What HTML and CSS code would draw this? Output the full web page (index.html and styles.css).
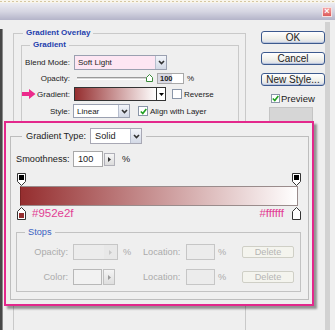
FILE: index.html
```html
<!DOCTYPE html>
<html>
<head>
<meta charset="utf-8">
<link rel="stylesheet" href="styles.css">
</head>
<body>
<div class="page">
  <div class="topstrip"></div>
  <div class="titlebar"><span class="close">×</span></div>
  <div class="dialog">
    <div class="stylelist"></div>
    <div class="main">
      <fieldset class="group outer">
        <legend class="glegend">Gradient Overlay</legend>
        <fieldset class="group inner">
          <legend class="glegend glegend-in">Gradient</legend>
          <div class="row r-blend">
            <span class="lbl">Blend Mode:</span>
            <div class="select pinksel"><span class="seltext">Soft Light</span><span class="ddbtn"><svg width="7" height="5" viewBox="0 0 7 5"><polyline points="1,1 3.5,3.6 6,1" fill="none" stroke="#333" stroke-width="1.6"/></svg></span></div>
          </div>
          <div class="row r-opacity">
            <span class="lbl">Opacity:</span>
            <div class="slider"><span class="track"></span><svg class="thumb" width="7" height="8" viewBox="0 0 7 8"><path d="M3.5 0.5 L6.5 3.5 V7.5 H0.5 V3.5 Z" fill="#fff" stroke="#3a8a3a" stroke-width="1"/></svg></div>
            <span class="numbox">100</span><span class="pct">%</span>
          </div>
          <div class="row r-grad">
            <span class="lbl lbl-arrow"><svg width="14" height="10" viewBox="0 0 14 10"><path d="M0 3 H7 V0 L13.5 5 L7 10 V7 H0 Z" fill="#ec2a8c"/></svg><span>Gradient:</span></span>
            <div class="gswatch"></div>
            <span class="ddsmall"><svg width="5" height="3" viewBox="0 0 5 3"><path d="M0 0 H5 L2.5 3 Z" fill="#000"/></svg></span>
            <span class="cb cb-rev"></span><span class="cbtext">Reverse</span>
          </div>
          <div class="row r-style">
            <span class="lbl lbl-style">Style:</span>
            <div class="select linsel"><span class="seltext">Linear</span><span class="ddbtn"><svg width="7" height="5" viewBox="0 0 7 5"><polyline points="1,1 3.5,3.6 6,1" fill="none" stroke="#333" stroke-width="1.6"/></svg></span></div>
            <span class="cb cb-align"><svg width="7" height="7" viewBox="0 0 7 7"><path d="M0.8 3.5 L2.8 5.6 L6.3 1" fill="none" stroke="#21a121" stroke-width="1.6"/></svg></span><span class="cbtext">Align with Layer</span>
          </div>
        </fieldset>
      </fieldset>
    </div>
    <div class="side">
      <button class="xpbtn">OK</button>
      <button class="xpbtn">Cancel</button>
      <button class="xpbtn">New Style...</button>
      <div class="preview-row"><span class="cb cb-prev"><svg width="7" height="7" viewBox="0 0 7 7"><path d="M0.8 3.5 L2.8 5.6 L6.3 1" fill="none" stroke="#21a121" stroke-width="1.6"/></svg></span><span class="prevtext">Preview</span></div>
      <div class="prevswatch"></div>
    </div>
    <div class="rightedge"></div>
  </div>

  <div class="editor">
    <fieldset class="gfs">
      <legend class="typelegend">
        <span>Gradient Type:</span>
        <div class="select solidsel"><span class="seltext">Solid</span><span class="ddbtn"><svg width="7" height="5" viewBox="0 0 7 5"><polyline points="1,1 3.5,3.6 6,1" fill="none" stroke="#333" stroke-width="1.6"/></svg></span></div>
      </legend>
      <div class="smooth-row">
        <span class="smooth-lbl">Smoothness:</span>
        <span class="smooth-in">100</span>
        <span class="arrowbtn"><svg width="3" height="5" viewBox="0 0 3 5"><path d="M0 0 L3 2.5 L0 5 Z" fill="#333"/></svg></span>
        <span class="smooth-pct">%</span>
      </div>
      <div class="markers">
        <svg width="9" height="13" viewBox="0 0 9 13"><path d="M0.5 0.5 H8.5 V8.5 L4.5 12.5 L0.5 8.5 Z" fill="#fff" stroke="#333"/><rect x="2" y="2" width="5" height="5" fill="#000"/></svg>
        <svg width="9" height="13" viewBox="0 0 9 13"><path d="M0.5 0.5 H8.5 V8.5 L4.5 12.5 L0.5 8.5 Z" fill="#fff" stroke="#333"/><rect x="2" y="2" width="5" height="5" fill="#000"/></svg>
      </div>
      <div class="gbar"></div>
      <div class="markers colorstops">
        <svg width="9" height="13" viewBox="0 0 9 13"><path d="M4.5 0.5 L8.5 4.5 V12.5 H0.5 V4.5 Z" fill="#fff" stroke="#333"/><rect x="2" y="6" width="5" height="5" fill="#952e2f"/></svg>
        <span class="hex hex-left">#952e2f</span>
        <span class="hex hex-right">#ffffff</span>
        <svg width="9" height="13" viewBox="0 0 9 13"><path d="M4.5 0.5 L8.5 4.5 V12.5 H0.5 V4.5 Z" fill="#fff" stroke="#333"/></svg>
      </div>
      <fieldset class="stops">
        <legend class="stopslegend">Stops</legend>
        <div class="stopgrid">
          <span class="slbl">Opacity:</span>
          <span class="dis-in opin"><span class="in-arrow"><svg width="3" height="5" viewBox="0 0 3 5"><path d="M0 0 L3 2.5 L0 5 Z" fill="#c8c8c8"/></svg></span></span>
          <span class="spct">%</span>
          <span class="loclbl">Location:</span>
          <span class="dis-in"></span>
          <span class="spct2">%</span>
          <span class="delbtn">Delete</span>

          <span class="slbl">Color:</span>
          <span class="colorctl"><span class="dis-sw"></span><span class="dis-arrow"><svg width="3" height="5" viewBox="0 0 3 5"><path d="M0 0 L3 2.5 L0 5 Z" fill="#9a9a9a"/></svg></span></span>
          <span class="spct"></span>
          <span class="loclbl">Location:</span>
          <span class="dis-in"></span>
          <span class="spct2">%</span>
          <span class="delbtn">Delete</span>
        </div>
      </fieldset>
    </fieldset>
  </div>
</div>
</body>
</html>
```

FILE: styles.css
```css
* { box-sizing: border-box; }
html, body { margin: 0; padding: 0; }
body {
  width: 335px;
  height: 330px;
  overflow: hidden;
  background: #efefef;
  font-family: "Liberation Sans", Arial, sans-serif;
  font-size: 8px;
  color: #222;
}
.page { position: relative; width: 335px; height: 330px; overflow: hidden; }

.topstrip {
  height: 3px;
  background-color: #f8f5ec;
  background-image: repeating-linear-gradient(90deg, #d6c7a2 0 2px, transparent 2px 4px);
  background-size: 100% 1px;
  background-repeat: no-repeat;
  background-position: 0 1px;
}
.titlebar {
  height: 17px;
  background: linear-gradient(#ececf2, #d6d6e2 50%, #b4b4c9);
  display: flex;
  justify-content: flex-end;
  align-items: flex-start;
  padding: 4px 3px 0 0;
}
.close {
  width: 10px;
  height: 10px;
  background: linear-gradient(#f4a0a0, #dc5a5a);
  border: 1px solid #f6e0e0;
  color: #fff;
  font-size: 9px;
  line-height: 7px;
  text-align: center;
  font-weight: bold;
}

.dialog {
  display: grid;
  grid-template-columns: 3px 258px 64px 5px 1px;
  height: 310px;
}
.stylelist { margin-top: 9px; background: #474747; border-right: 1px solid #8a8a8a; }
.rightedge { background: #d2d2d2; margin-top: 2px; }

fieldset.group {
  border: 1px solid #c9c9c9;
  margin: 0;
  min-inline-size: 0;
}
.outer {
  margin: 8px 0 0 10px !important;
  width: 233px;
  height: 320px;
  padding: 2px 6px 0 7px;
}
.glegend {
  font-weight: bold;
  color: #1f3fae;
  font-size: 8px;
  line-height: 10px;
  padding: 0 3px;
  margin-left: 2px;
}
.glegend-in { margin-left: 8px; }
.inner { padding: 5px 0 8px 0; }

.row { display: flex; align-items: center; }
.lbl { width: 48px; text-align: right; margin-right: 4px; flex: none; white-space: nowrap; }
.r-blend { height: 15px; margin-bottom: 3px; }
.r-opacity { height: 11px; margin-bottom: 3px; }
.r-grad { height: 14px; margin-bottom: 3px; }
.r-style { height: 14px; }

.select {
  display: flex;
  align-items: stretch;
  border: 1px solid #9aa0b0;
  background: #fff;
  height: 100%;
}
.seltext { flex: 1; padding-left: 3px; display: flex; align-items: center; white-space: nowrap; }
.ddbtn {
  width: 11px;
  flex: none;
  display: flex;
  align-items: center;
  justify-content: center;
  background: linear-gradient(#f3f5fa, #d3d9e6);
  border-left: 1px solid #b8bfcf;
}
.pinksel { width: 93px; background: #fde6f3; }
.linsel { width: 57px; }
.lbl-style { margin-right: 3px; }

.slider { display: flex; align-items: center; margin-left: 3px; height: 100%; }
.track { width: 71px; height: 3px; border-top: 1px solid #9a9a9a; border-bottom: 1px solid #fff; background: #d8d8d8; }
.thumb { margin-left: -2px; margin-top: -2px; }
.numbox {
  margin-left: 4px;
  width: 27px;
  height: 11px;
  border: 1px solid #a8a8a8;
  background: #fff;
  font-weight: bold;
  font-size: 7.5px;
  line-height: 9px;
  padding-left: 2px;
}
.numbox { background: linear-gradient(90deg, #d9d9e4 0 14px, #fff 14px); }
.pct { margin-left: 3px; }

.lbl-arrow { display: flex; justify-content: space-between; align-items: center; }
.gswatch {
  width: 83px;
  height: 14px;
  border: 1px solid #333;
  background: linear-gradient(90deg, #952e2f, #fff);
}
.ddsmall {
  width: 9px;
  height: 14px;
  border: 1px solid #333;
  border-left: none;
  background: #fff;
  display: flex;
  align-items: center;
  justify-content: center;
}
.cb {
  width: 10px;
  height: 10px;
  flex: none;
  border: 1px solid #8a96a8;
  background: #fff;
  display: flex;
  align-items: center;
  justify-content: center;
}
.cb-rev { margin-left: 6px; }
.cb-align { margin-left: 8px; }
.cbtext { margin-left: 2px; white-space: nowrap; }

.side { display: flex; flex-direction: column; padding-top: 11px; }
.xpbtn {
  font-family: "Liberation Sans", Arial, sans-serif;
  font-size: 10px;
  color: #222;
  height: 13px;
  line-height: 11px;
  padding: 0;
  margin: 0 0 8px 0;
  border: 1px solid #3d5a8e;
  border-radius: 3px;
  background: linear-gradient(#ffffff, #f0f0ea 60%, #d8dce8);
  box-shadow: inset 0 -1px 0 #b8c4dc;
  white-space: nowrap;
}
.preview-row { display: flex; align-items: center; height: 9px; margin-left: 10px; }
.cb-prev { width: 9px; height: 9px; }
.prevtext { margin-left: 1px; font-size: 9.5px; white-space: nowrap; }
.prevswatch { margin: 4px 0 0 8px; width: 44px; height: 30px; background: #d6d6d6; border: 1px solid #c4c4c4; }

/* Gradient editor overlay */
.editor {
  position: absolute;
  left: 4px;
  top: 121px;
  width: 310px;
  height: 185px;
  border: 2px solid #e3288c;
  background: #efefef;
  box-shadow: 3px 3px 2px rgba(0, 0, 0, 0.38);
  padding: 5px 0 0 4px;
  font-size: 9.2px;
  color: #222;
}
.gfs {
  margin: 0;
  width: 299px;
  border: 1px solid #bdbdbd;
  padding: 7px 0 7px 5px;
  min-inline-size: 0;
}
.typelegend {
  display: flex;
  align-items: center;
  padding: 0 4px;
  margin-left: 6px;
  height: 16px;
  white-space: nowrap;
}
.solidsel { width: 52px; height: 16px; margin-left: 4px; border-color: #a8a8b4; }
.solidsel .seltext { padding-left: 4px; }

.smooth-row { display: flex; align-items: center; height: 16px; }
.smooth-lbl { width: 52px; margin-right: 5px; white-space: nowrap; }
.smooth-in {
  width: 30px;
  height: 16px;
  border: 1px solid #a8a8a8;
  background: #fff;
  padding-left: 4px;
  line-height: 14px;
}
.arrowbtn {
  width: 11px;
  height: 13px;
  margin-left: 1px;
  border: 1px solid #b0b0b8;
  background: linear-gradient(#f6f6f6, #dcdcdc);
  display: flex;
  align-items: center;
  justify-content: center;
}
.smooth-pct { margin-left: 7px; }

.markers {
  display: flex;
  justify-content: space-between;
  align-items: flex-start;
  width: 286px;
  padding: 0 1px;
  height: 13px;
  margin-top: 6px;
}
.markers svg { display: block; flex: none; }
.gbar {
  margin-left: 4px;
  width: 278px;
  height: 20px;
  border: 1px solid #9a8c8c;
  border-left-color: #7a2424;
  background: linear-gradient(90deg, #952e2f, #ffffff);
}
.colorstops { margin-top: 1px; align-items: center; }
.hex { color: #e23d93; font-size: 11.5px; line-height: 13px; white-space: nowrap; }
.hex-left { margin-left: 6px; margin-right: auto; }
.hex-right { margin-right: 8px; }

.stops {
  margin: 7px 0 0 0;
  width: 285px;
  border: 1px solid #c2c2c2;
  padding: 6px 0 6px 0;
  min-inline-size: 0;
}
.stopslegend {
  color: #3a62c2;
  font-size: 9.2px;
  line-height: 11px;
  padding: 0 3px;
  margin-left: 8px;
}
.stopgrid {
  display: grid;
  grid-template-columns: 56px 45px 25px 43px 29px 27px 52px;
  grid-auto-rows: 16px;
  row-gap: 9px;
  align-items: center;
  color: #ababab;
}
.slbl { text-align: right; padding-right: 5px; white-space: nowrap; }
.spct { padding-left: 5px; }
.spct2 { padding-left: 3px; }
.loclbl { white-space: nowrap; }
.dis-in {
  height: 16px;
  border: 1px solid #c6c6c6;
  background: #ececec;
}
.opin { display: flex; justify-content: flex-end; }
.in-arrow { width: 13px; display: flex; align-items: center; justify-content: center; background: #e8e8e8; }
.colorctl { display: flex; height: 16px; gap: 1px; }
.dis-sw { width: 29px; border: 1px solid #b8b8b8; background: #f2f2f2; }
.dis-arrow {
  width: 12px;
  border: 1px solid #c0c0c0;
  background: linear-gradient(#f4f4f4, #dedede);
  display: flex;
  align-items: center;
  justify-content: center;
}
.delbtn {
  height: 12px;
  border: 1px solid #cfcfc6;
  border-radius: 2px;
  background: #f4f4ee;
  text-align: center;
  line-height: 10px;
  color: #b4b4b4;
}
```
